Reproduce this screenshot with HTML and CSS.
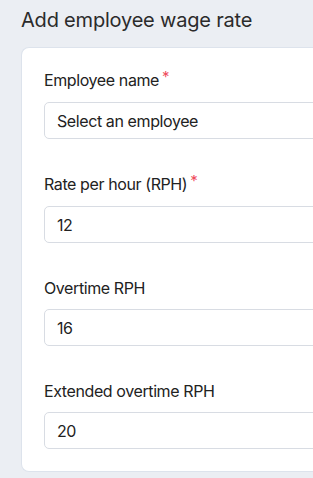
FILE: index.html
```html
<!DOCTYPE html>
<html lang="en">
<head>
    <meta charset="UTF-8">
    <meta name="viewport" content="width=device-width, initial-scale=1.0">
    <title>Add employee wage rate</title>
    <link rel="stylesheet" href="styles.css">
</head>
<body>
    <h1 class="page-title">Add employee wage rate</h1>

    <div class="form-card">
        <div class="field">
            <label class="field-label">Employee name<span class="required">*</span></label>
            <div class="field-input">Select an employee</div>
        </div>
        <div class="field">
            <label class="field-label">Rate per hour (RPH)<span class="required">*</span></label>
            <div class="field-input">12</div>
        </div>
        <div class="field">
            <label class="field-label">Overtime RPH</label>
            <div class="field-input">16</div>
        </div>
        <div class="field">
            <label class="field-label">Extended overtime RPH</label>
            <div class="field-input">20</div>
        </div>
    </div>
</body>
</html>
```

FILE: styles.css
```css
body {
    margin: 0;
    padding: 0 0 0 21px;
    background-color: #ebeef3;
    font-family: 'Inter', 'Noto Sans', sans-serif;
    color: #222;
    overflow: hidden;
    height: 478px;
    box-sizing: border-box;
}

.page-title {
    margin: 0;
    padding-top: 7px;
    height: 47px;
    box-sizing: border-box;
    font-size: 20px;
    line-height: 26px;
    font-weight: 400;
    color: #2b2b2b;
    letter-spacing: -0.2px;
}

.form-card {
    width: 330px;
    background: #fff;
    border: 1px solid #dde3ec;
    border-right: none;
    border-radius: 8px 0 0 8px;
    padding: 22px 0 22px 22px;
    display: flex;
    flex-direction: column;
    gap: 35px;
}

.field {
    display: flex;
    flex-direction: column;
    gap: 11px;
}

.field-label {
    font-size: 16px;
    line-height: 20px;
    color: #222;
    letter-spacing: -0.4px;
}

.required {
    color: #ef4d5c;
    font-size: 15px;
    position: relative;
    top: -4px;
    margin-left: 3px;
}

.field-input {
    height: 37px;
    box-sizing: border-box;
    border: 1px solid #d8dce3;
    border-radius: 5px;
    padding: 0 12px;
    display: flex;
    align-items: center;
    font-size: 16px;
    color: #222;
    letter-spacing: -0.4px;
}
```
